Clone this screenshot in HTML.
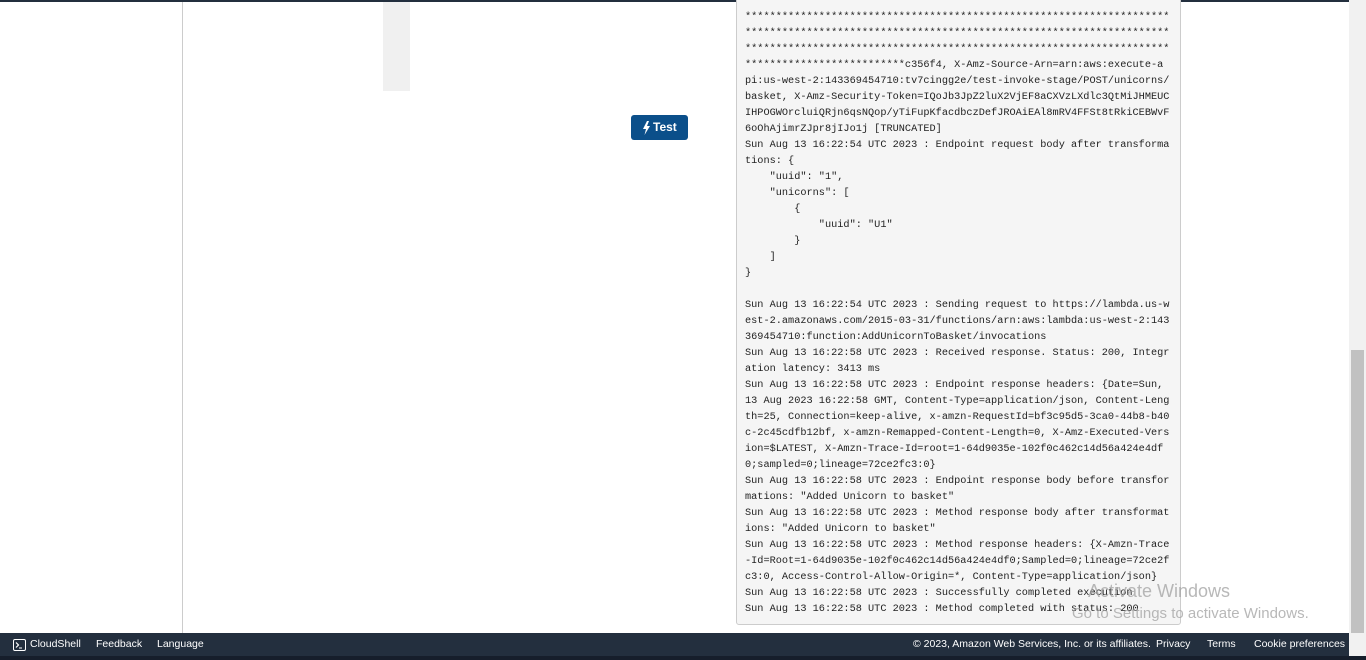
<!DOCTYPE html>
<html><head><meta charset="utf-8"><style>
html,body{margin:0;padding:0;width:1366px;height:660px;overflow:hidden;background:#fff;font-family:"Liberation Sans",sans-serif;}
.topbar{position:absolute;left:0;top:0;width:1349px;height:2px;background:#232f3e;}
.vline{position:absolute;left:182px;top:2px;width:1px;height:631px;background:#ccc;}
.gray{position:absolute;left:383px;top:2px;width:27px;height:89px;background:#f0f0f0;}
.btn{position:absolute;left:631px;top:115px;width:57px;height:25px;background:#0b4f8a;border-radius:3px;color:#fff;font-weight:bold;font-size:12px;line-height:25px;box-sizing:border-box;padding-left:11px;}
.btn svg{position:absolute;left:11px;top:6px;}
.btn span{margin-left:11px;}
.log{position:absolute;left:736px;top:-2px;width:443px;height:625px;background:#f5f5f5;border:1px solid #ccc;border-radius:0 0 3px 3px;}
.log pre{margin:0;position:absolute;left:8px;top:10px;font-family:"Liberation Mono",monospace;font-size:10.25px;line-height:16px;color:#222;}
.footer{position:absolute;left:0;top:633px;width:1349px;height:23px;background:#232f3e;color:#fff;font-size:10.5px;line-height:23px;white-space:nowrap;}
.footer .f{position:absolute;top:0;}
.bot{position:absolute;left:0;top:656px;width:1366px;height:4px;background:#161e2b;}
.sb{position:absolute;left:1349px;top:0;width:17px;height:656px;background:#f1f1f1;}
.thumb{position:absolute;left:1351px;top:350px;width:13px;height:283px;background:#c1c1c1;}
.wm{position:absolute;color:rgba(160,160,160,0.75);white-space:nowrap;}
</style></head><body>
<div class="topbar"></div>
<div class="vline"></div>
<div class="gray"></div>
<div class="btn"><svg width="9" height="14" viewBox="0 0 9 14"><path d="M5 0 L1 8 H4 L2.5 14 L8 5 H5 L7 0Z" fill="#fff"/></svg><span>Test</span></div>
<div class="log"><pre>*********************************************************************
*********************************************************************
*********************************************************************
**************************c356f4, X-Amz-Source-Arn=arn:aws:execute-a
pi:us-west-2:143369454710:tv7cingg2e/test-invoke-stage/POST/unicorns/
basket, X-Amz-Security-Token=IQoJb3JpZ2luX2VjEF8aCXVzLXdlc3QtMiJHMEUC
IHPOGWOrcluiQRjn6qsNQop/yTiFupKfacdbczDefJROAiEAl8mRV4FFSt8tRkiCEBWvF
6oOhAjimrZJpr8jIJo1j [TRUNCATED]
Sun Aug 13 16:22:54 UTC 2023 : Endpoint request body after transforma
tions: {
    "uuid": "1",
    "unicorns": [
        {
            "uuid": "U1"
        }
    ]
}

Sun Aug 13 16:22:54 UTC 2023 : Sending request to https://lambda.us-w
est-2.amazonaws.com/2015-03-31/functions/arn:aws:lambda:us-west-2:143
369454710:function:AddUnicornToBasket/invocations
Sun Aug 13 16:22:58 UTC 2023 : Received response. Status: 200, Integr
ation latency: 3413 ms
Sun Aug 13 16:22:58 UTC 2023 : Endpoint response headers: {Date=Sun,
13 Aug 2023 16:22:58 GMT, Content-Type=application/json, Content-Leng
th=25, Connection=keep-alive, x-amzn-RequestId=bf3c95d5-3ca0-44b8-b40
c-2c45cdfb12bf, x-amzn-Remapped-Content-Length=0, X-Amz-Executed-Vers
ion=$LATEST, X-Amzn-Trace-Id=root=1-64d9035e-102f0c462c14d56a424e4df
0;sampled=0;lineage=72ce2fc3:0}
Sun Aug 13 16:22:58 UTC 2023 : Endpoint response body before transfor
mations: "Added Unicorn to basket"
Sun Aug 13 16:22:58 UTC 2023 : Method response body after transformat
ions: "Added Unicorn to basket"
Sun Aug 13 16:22:58 UTC 2023 : Method response headers: {X-Amzn-Trace
-Id=Root=1-64d9035e-102f0c462c14d56a424e4df0;Sampled=0;lineage=72ce2f
c3:0, Access-Control-Allow-Origin=*, Content-Type=application/json}
Sun Aug 13 16:22:58 UTC 2023 : Successfully completed execution
Sun Aug 13 16:22:58 UTC 2023 : Method completed with status: 200</pre></div>
<div class="wm" style="left:1088px;top:581px;font-size:18px;">Activate Windows</div>
<div class="wm" style="left:1072px;top:605px;font-size:15px;">Go to Settings to activate Windows.</div>
<div class="footer">
<svg class="f" style="left:13px;top:6px" width="13" height="12" viewBox="0 0 13 12"><rect x="0.5" y="0.5" width="12" height="11" rx="1.5" fill="none" stroke="#fff"/><path d="M3 3.5 L5.5 6 L3 8.5" fill="none" stroke="#fff" stroke-width="1.2"/><path d="M6 9 H9" stroke="#fff"/></svg>
<span class="f" style="left:30px">CloudShell</span>
<span class="f" style="left:96px">Feedback</span>
<span class="f" style="left:157px">Language</span>
<span class="f" style="left:913px">© 2023, Amazon Web Services, Inc. or its affiliates.</span>
<span class="f" style="left:1156px">Privacy</span>
<span class="f" style="left:1207px">Terms</span>
<span class="f" style="left:1254px">Cookie preferences</span>
</div>
<div class="bot"></div>
<div class="sb"></div>
<div class="thumb"></div>
</body></html>
